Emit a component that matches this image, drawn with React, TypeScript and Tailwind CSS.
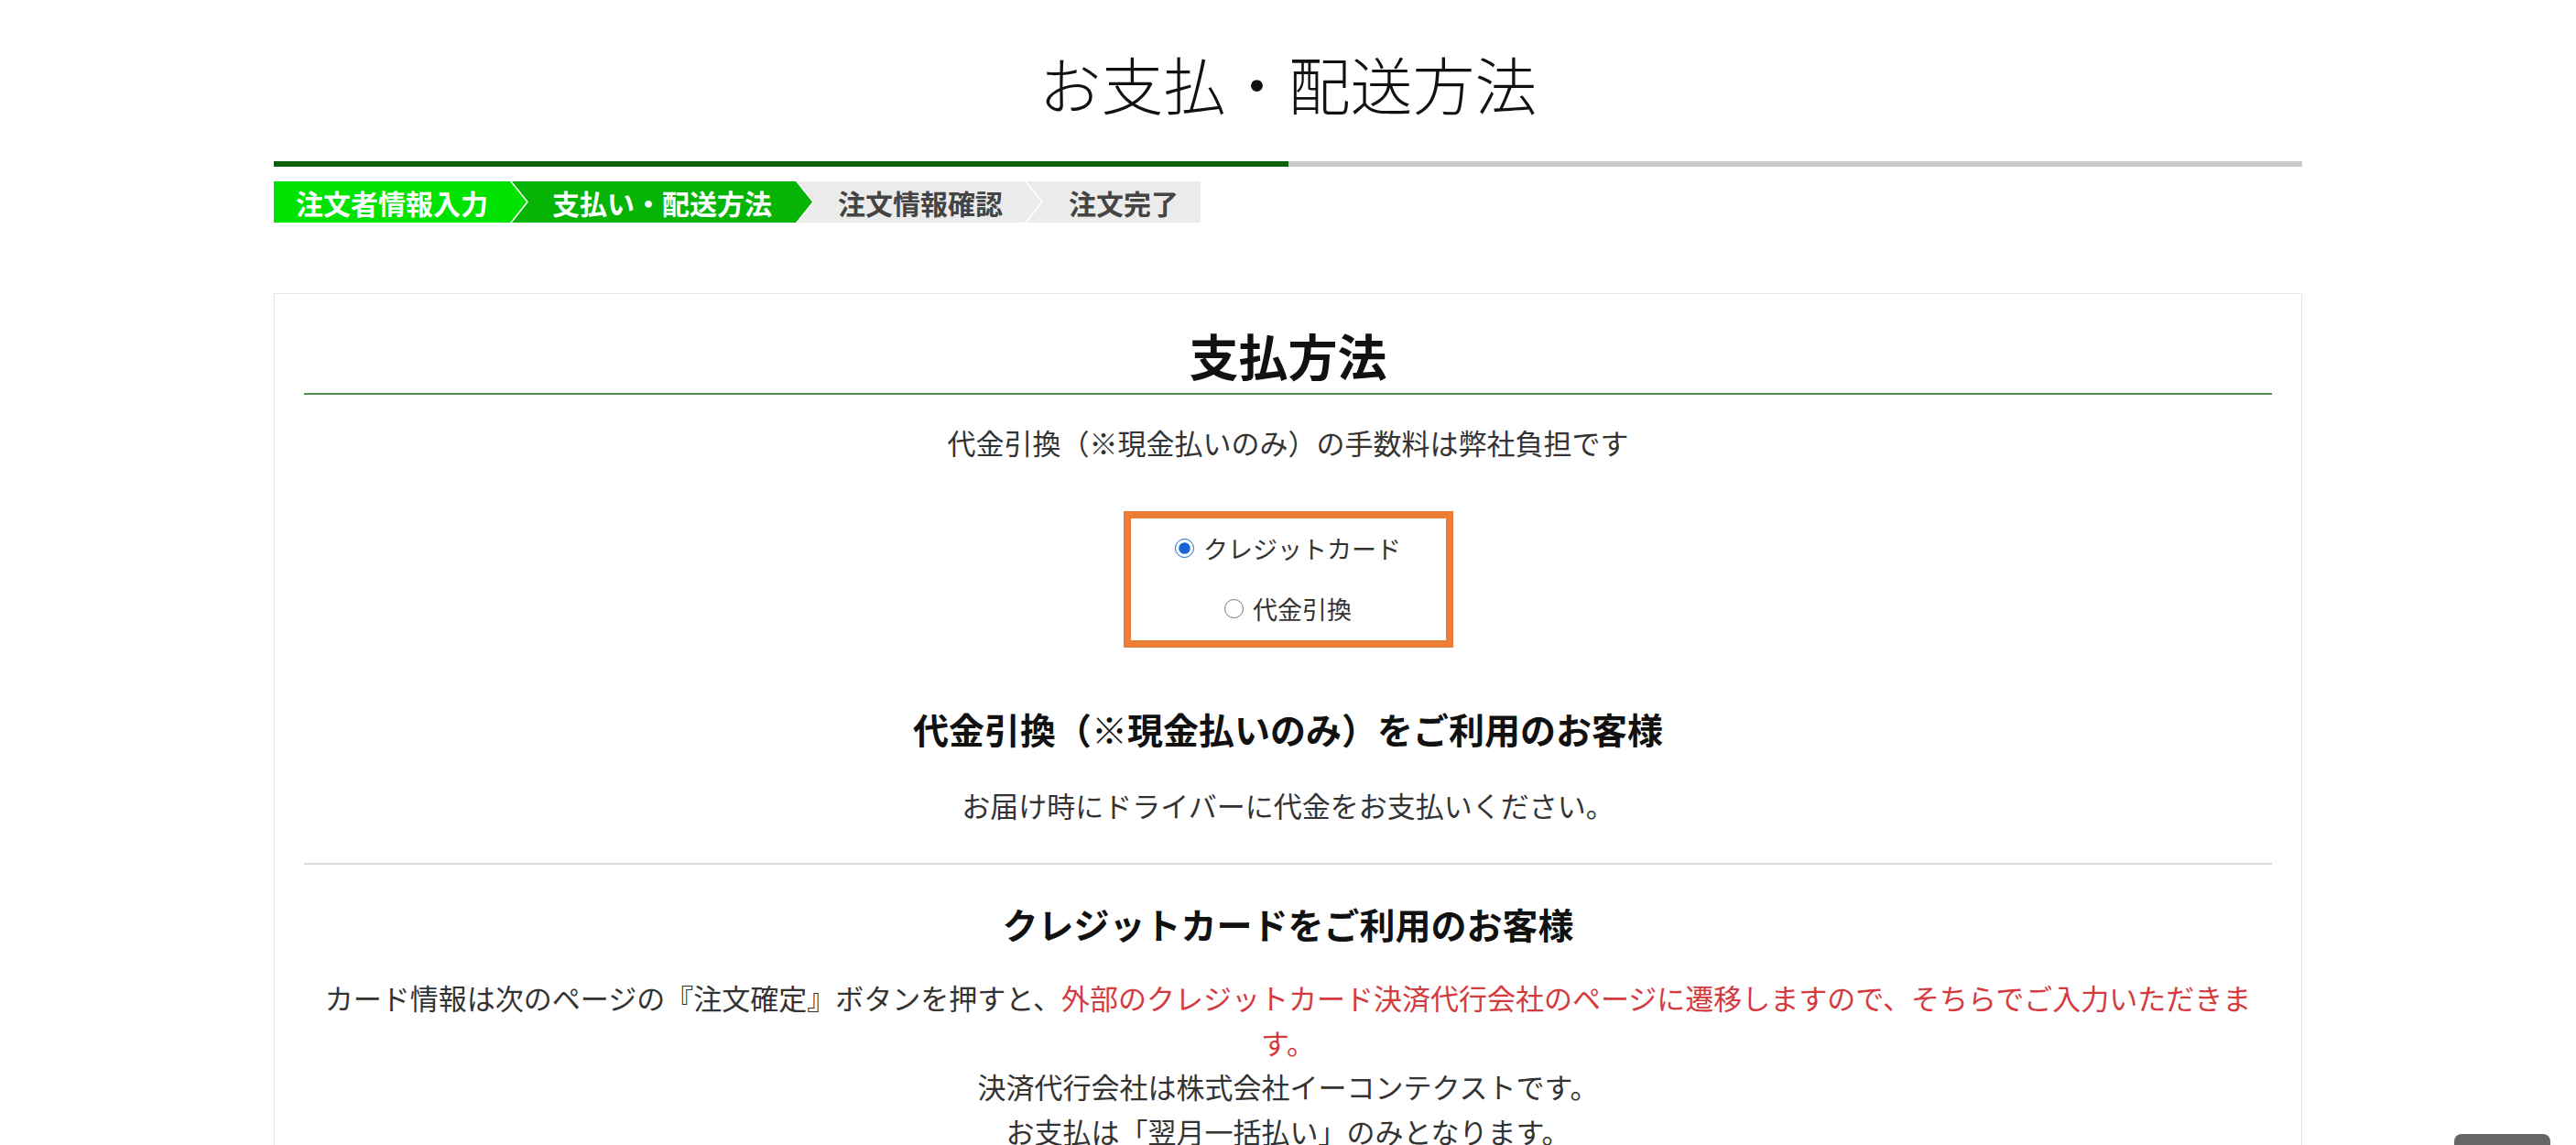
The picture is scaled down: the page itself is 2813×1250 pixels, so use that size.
import { useState } from 'react'

const jp = "font-['Noto_Sans_CJK_JP','Noto_Sans',sans-serif]"

export default function App() {
  const [payment, setPayment] = useState<'card' | 'cod'>('card')

  return (
    <div className={`min-h-screen bg-white text-[#333] ${jp}`}>
      {/* タイトル */}
      <h1 className="pt-[57px] text-center text-[68px] font-light leading-none text-[#111]">
        お支払・配送方法
      </h1>

      <div className="mx-auto w-[2215px]">
        {/* 進捗バー */}
        <div className="mt-[51px] flex h-[6px]">
          <div className="w-1/2 bg-[#0a610a]" />
          <div className="w-1/2 bg-[#c9c9c9]" />
        </div>

        {/* ステップ */}
        <div className="mt-[16px] flex h-[45px] text-[30px] font-bold leading-none">
          <div className="flex items-center bg-[#00e200] pl-[24px] pr-[42px] text-white [clip-path:polygon(0_0,calc(100%_-_18px)_0,100%_50%,calc(100%_-_18px)_100%,0_100%)]">
            注文者情報入力
          </div>
          <div className="-ml-[16px] flex items-center bg-[#05b405] pl-[44px] pr-[44px] text-white [clip-path:polygon(0_0,calc(100%_-_18px)_0,100%_50%,calc(100%_-_18px)_100%,0_100%,18px_50%)]">
            支払い・配送方法
          </div>
          <div className="-ml-[16px] flex items-center bg-[#ebebeb] pl-[44px] pr-[42px] text-[#444] [clip-path:polygon(0_0,calc(100%_-_18px)_0,100%_50%,calc(100%_-_18px)_100%,0_100%,18px_50%)]">
            注文情報確認
          </div>
          <div className="-ml-[16px] flex items-center bg-[#ebebeb] pl-[46px] pr-[24px] text-[#444] [clip-path:polygon(0_0,100%_0,100%_100%,0_100%,18px_50%)]">
            注文完了
          </div>
        </div>

        {/* 支払方法カード */}
        <div className="mt-[77px] border border-[#e6e6e6] px-[32px] pb-[80px] text-center">
          <h2 className="border-b-2 border-[#4b914b] pb-[14px] pt-[40px] text-[54px] font-bold leading-none text-[#111]">
            支払方法
          </h2>
          <p className="mt-[36px] text-[31px] leading-none">
            代金引換（※現金払いのみ）の手数料は弊社負担です
          </p>

          <div className="mx-auto mt-[60px] flex h-[149px] w-[360px] flex-col items-center border-[8px] border-[#ea7e34] pt-[19px] text-[27px] leading-none">
            <label className="flex h-[27px] items-center gap-[10px]">
              <input
                type="radio"
                name="payment"
                checked={payment === 'card'}
                onChange={() => setPayment('card')}
                className="m-0 h-[21px] w-[21px] accent-[#1565d8]"
              />
              クレジットカード
            </label>
            <label className="mt-[39px] flex h-[27px] items-center gap-[10px]">
              <input
                type="radio"
                name="payment"
                checked={payment === 'cod'}
                onChange={() => setPayment('cod')}
                className="m-0 h-[21px] w-[21px] accent-[#1565d8]"
              />
              代金引換
            </label>
          </div>

          <h3 className="mt-[69px] text-[39px] font-bold leading-none text-[#111]">
            代金引換（※現金払いのみ）をご利用のお客様
          </h3>
          <p className="mt-[48px] text-[31px] leading-none">
            お届け時にドライバーに代金をお支払いください。
          </p>

          <div className="mt-[48px] h-[2px] bg-[#dcdcdc]" />

          <h3 className="mt-[45px] text-[39px] font-bold leading-none text-[#111]">
            クレジットカードをご利用のお客様
          </h3>
          <p className="mx-auto mt-[37px] max-w-[2120px] text-[31px] leading-[48.6px]">
            カード情報は次のページの『注文確定』ボタンを押すと、
            <span className="text-[#d43a3e]">
              外部のクレジットカード決済代行会社のページに遷移しますので、そちらでご入力いただきます。
            </span>
            <br />
            決済代行会社は株式会社イーコンテクストです。
            <br />
            お支払は「翌月一括払い」のみとなります。
          </p>
        </div>
      </div>

      {/* ページトップボタン */}
      <button
        type="button"
        className="fixed bottom-[-40px] right-[28px] h-[52px] w-[105px] rounded-[8px] bg-[#666]"
        aria-label="ページトップへ"
      />
    </div>
  )
}
